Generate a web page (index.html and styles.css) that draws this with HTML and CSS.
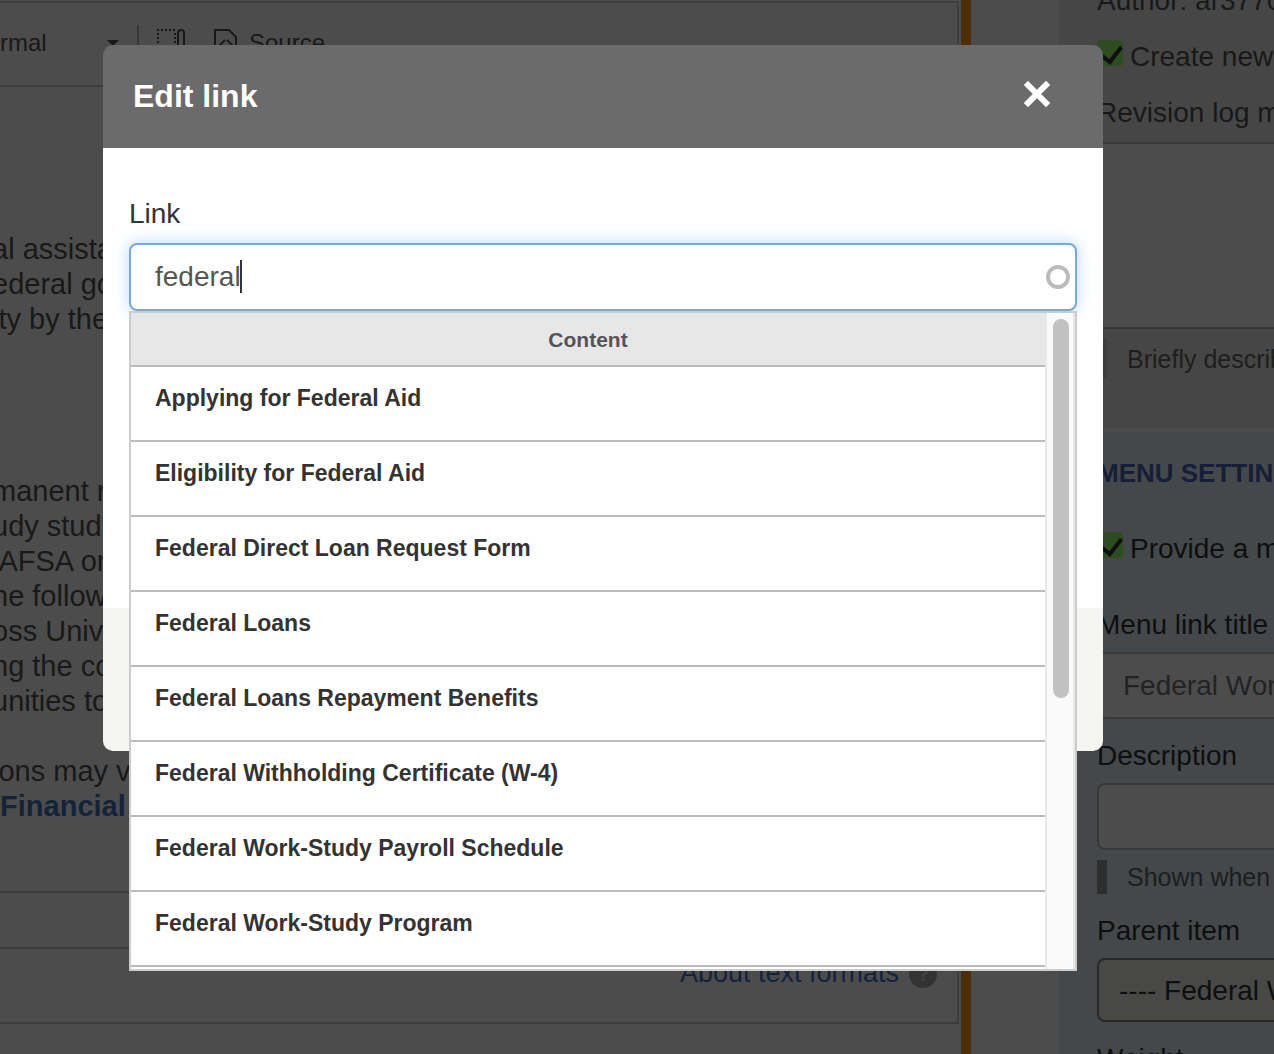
FILE: index.html
```html
<!DOCTYPE html>
<html lang="en">
<head>
	<meta charset="UTF-8">
	<title>Edit link</title>
	<link rel="stylesheet" href="styles.css">
</head>
<body>

	<div class="page">
		<div class="main">
			<div class="editor">
				<div class="toolbar">
					<button type="button" class="tool tool_format">rmal
						<svg width="12" height="6" viewBox="0 0 12 6"><path d="M0 0h12L6 6z" fill="currentColor"/></svg>
					</button>
					<button type="button" class="tool tool_blocks" aria-label="Show blocks">
						<svg width="28" height="30" viewBox="0 0 28 30" fill="none" stroke="currentColor" stroke-width="2">
							<path d="M0 2h20M1 5v24M18 5v24" stroke-dasharray="2 2"/>
							<rect x="21" y="2" width="6" height="26" rx="3"/>
						</svg>
					</button>
					<button type="button" class="tool tool_source">
						<svg width="24" height="30" viewBox="0 0 24 30" fill="none" stroke="currentColor" stroke-width="2">
							<path d="M1 28V2h14l7 7v19z"/>
							<path d="M11 12l-6 6 6 5M13 12l6 6-6 5"/>
						</svg>
						Source
					</button>
				</div>
				<div class="content">
					<p>al assista<br>ederal go<br>ity by the</p>
					<p class="study">manent r<br>udy stud<br> AFSA on<br>he follow<br>oss Univ<br>ng the co<br>unities to</p>
					<p>ions may v<br> <a href="#">Financial</a></p>
				</div>
				<div class="path"></div>
				<div class="formats">
					<a href="#">About text formats</a>
					<span class="help">?</span>
				</div>
			</div>
		</div>

		<div class="sidebar">
			<div class="revision">
				<div class="author">Author: ar3770</div>
				<label class="check"><input type="checkbox" checked> Create new</label>
				<label class="field_label" for="log">Revision log m</label>
				<textarea id="log"></textarea>
				<div class="hint hint_log">Briefly describe</div>
			</div>
			<div class="menu">
				<h2>MENU SETTINGS</h2>
				<label class="check"><input type="checkbox" checked> Provide a m</label>
				<label class="field_label" for="title">Menu link title</label>
				<input class="field" type="text" id="title" value="Federal Work-Study">
				<label class="field_label" for="description">Description</label>
				<input class="field" type="text" id="description">
				<div class="hint">Shown when</div>
				<label class="field_label" for="parent">Parent item</label>
				<select class="field" id="parent"><option>---- Federal Work-Study</option></select>
				<div class="field_label">Weight</div>
			</div>
		</div>
	</div>

	<div class="overlay">
		<div class="dialog" role="dialog" aria-labelledby="dialog_title">
			<div class="dialog_head">
				<h1 id="dialog_title">Edit link</h1>
				<button type="button" class="close" aria-label="Close">
					<svg width="26" height="26" viewBox="0 0 26 26"><path d="M4 4l18 18M22 4L4 22" stroke="#fff" stroke-width="6" stroke-linecap="square"/></svg>
				</button>
			</div>
			<div class="dialog_body">
				<label for="link">Link</label>
				<div class="autocomplete">
					<input type="text" id="link" value="federal" autocomplete="off">
					<span class="caret"></span>
					<span class="throbber"></span>
					<div class="results">
						<ul>
							<li class="group">Content</li>
							<li>Applying for Federal Aid</li>
							<li>Eligibility for Federal Aid</li>
							<li>Federal Direct Loan Request Form</li>
							<li>Federal Loans</li>
							<li>Federal Loans Repayment Benefits</li>
							<li>Federal Withholding Certificate (W-4)</li>
							<li>Federal Work-Study Payroll Schedule</li>
							<li>Federal Work-Study Program</li>
						</ul>
						<div class="scrollbar"><div class="thumb"></div></div>
					</div>
				</div>
			</div>
			<div class="dialog_foot"></div>
		</div>
	</div>

</body>
</html>
```
FILE: styles.css
```css
*{
	box-sizing: border-box;
}
body{
	margin: 0;
	font-family: "Liberation Sans", Arial, sans-serif;
	font-size: 28px;
	line-height: 35px;
	color: #333;
	background: #fff;
}
h1, h2, p, ul{
	margin: 0;
	padding: 0;
}
button, input, select, textarea{
	font: inherit;
	color: inherit;
}
a{
	color: #4a74c4;
	text-decoration: none;
}
.page{
	display: grid;
	grid-template-columns: minmax(0, 1fr) 215px;
	height: 100vh;
	overflow: hidden;
	white-space: nowrap;
}

/* editor */
.main{
	margin-right: 88px;
	padding: 1px 2px 0 0;
	border-right: 10px solid #ff9c2c;
}
.editor{
	border: 2px solid #ccc;
	border-left: 0;
	color: #555;
}
.toolbar{
	display: flex;
	height: 84px;
	padding-top: 22px;
	border-bottom: 2px solid #ccc;
	font-size: 24px;
}
.tool{
	display: flex;
	align-items: center;
	height: 35px;
	padding: 0;
	border: 0;
	background: none;
}
.tool_format{
	justify-content: space-between;
	width: 139px;
	padding-right: 18px;
	border-right: 2px solid #bbb;
}
.tool_blocks{
	margin: 0 29px 0 18px;
}
.tool_source{
	gap: 11px;
}
.content{
	height: 806px;
	margin-left: -8px;
	padding-top: 145px;
	border-bottom: 2px solid #ccc;
	font-size: 29px;
}
.content p{
	white-space: pre;
}
.content .study{
	margin: 137px 0 35px;
}
.content a{
	font-weight: bold;
}
.path{
	height: 56px;
	border-bottom: 2px solid #ccc;
}
.formats{
	display: flex;
	justify-content: flex-end;
	align-items: center;
	gap: 10px;
	height: 73px;
	padding: 0 20px 24px 0;
	font-size: 27px;
}
.help{
	width: 28px;
	height: 28px;
	border-radius: 50%;
	background: #aaa;
	color: #ddd;
	font-size: 20px;
	font-weight: bold;
	line-height: 28px;
	text-align: center;
}

/* sidebar */
.sidebar{
	display: flex;
	flex-direction: column;
	margin-top: -17px;
	overflow: hidden;
}
.revision{
	flex: none;
	height: 449px;
	padding-left: 38px;
	border-bottom: 4px solid #fff;
	background: #ececec;
	color: #555;
}
.menu{
	flex: 1;
	padding: 24px 0 0 38px;
	background: #e3f1fa;
}
.menu h2{
	color: #4a68b8;
	font-size: 26px;
	line-height: 35px;
}
.check{
	display: flex;
	gap: 7px;
	margin-top: 21px;
}
.menu .check{
	margin: 40px 0 41px;
}
.check input{
	appearance: none;
	flex: none;
	position: relative;
	width: 26px;
	height: 26px;
	margin: 1px 0 0;
	border-radius: 4px;
	background: #96ff70;
}
.check input::before{
	content: "";
	position: absolute;
	left: 8px;
	top: 2px;
	width: 9px;
	height: 17px;
	border: solid #333;
	border-width: 0 4px 4px 0;
	transform: rotate(38deg);
}
.field_label{
	display: block;
	margin-top: 19px;
}
.revision .field_label{
	margin-top: 21px;
}
textarea{
	display: block;
	width: 400px;
	height: 187px;
	margin-top: 12px;
	border: 2px solid #bbb;
	background: #fff;
	resize: none;
}
.field{
	display: block;
	width: 400px;
	height: 67px;
	margin-top: 10px;
	padding: 0 24px;
	border: 2px solid #bbb;
	border-radius: 8px;
	background: #fff;
}
input.field{
	color: #777;
}
select.field{
	height: 64px;
	padding: 0 20px;
	appearance: none;
	border-color: #888;
	background: #f2f1ea;
}
.hint{
	height: 34px;
	margin-top: 10px;
	padding-left: 20px;
	border-left: 10px solid #999;
	color: #666;
	font-size: 25px;
}
.hint_log{
	height: 40px;
	line-height: 40px;
	border-color: #ccc;
}

/* dialog */
.overlay{
	position: fixed;
	inset: 0;
	padding: 45px 171px 0 103px;
	background: rgba(0, 0, 0, 0.7);
}
.dialog_head{
	display: flex;
	justify-content: space-between;
	align-items: center;
	height: 103px;
	padding: 0 53px 0 30px;
	border-radius: 10px 10px 0 0;
	background: #6b6b6b;
	color: #fff;
}
.dialog_head h1{
	font-size: 32px;
	line-height: 35px;
}
.close{
	display: flex;
	padding: 0 0 6px;
	border: 0;
	background: none;
}
.dialog_body{
	height: 460px;
	padding: 48px 26px 0;
	background: #fff;
}
.dialog_body label{
	display: block;
	margin-bottom: 12px;
}
.autocomplete{
	position: relative;
}
.autocomplete input{
	display: block;
	width: 100%;
	height: 68px;
	padding: 0 24px;
	border: 2px solid #78a8dc;
	border-radius: 8px;
	outline: 0;
	background: #fff;
	box-shadow: 0 0 16px #b5d9fa;
	color: #555;
}
.caret{
	position: absolute;
	left: 111px;
	top: 17px;
	width: 2px;
	height: 33px;
	background: #333;
}
.throbber{
	position: absolute;
	right: 7px;
	top: 22px;
	width: 24px;
	height: 24px;
	border: 4px solid #bbb;
	border-radius: 50%;
}
.results{
	position: absolute;
	top: 100%;
	left: 0;
	right: 0;
	display: flex;
	height: 660px;
	border: 2px solid #ccc;
	background: #fff;
}
.results ul{
	flex: 1;
	list-style: none;
}
.results li{
	height: 75px;
	padding: 14px 24px;
	border-bottom: 2px solid #bbb;
	font-size: 23px;
	font-weight: bold;
}
.results .group{
	height: 54px;
	padding: 9px 0;
	background: #e7e7e7;
	color: #555;
	font-size: 21px;
	text-align: center;
}
.scrollbar{
	width: 30px;
	padding: 6px;
	border: solid #e8e8e8;
	border-width: 0 2px;
	background: #fafafa;
}
.thumb{
	width: 16px;
	height: 379px;
	border-radius: 8px;
	background: #c1c1c1;
}
.dialog_foot{
	height: 143px;
	border-radius: 0 0 10px 10px;
	background: #f5f5f2;
}
```
